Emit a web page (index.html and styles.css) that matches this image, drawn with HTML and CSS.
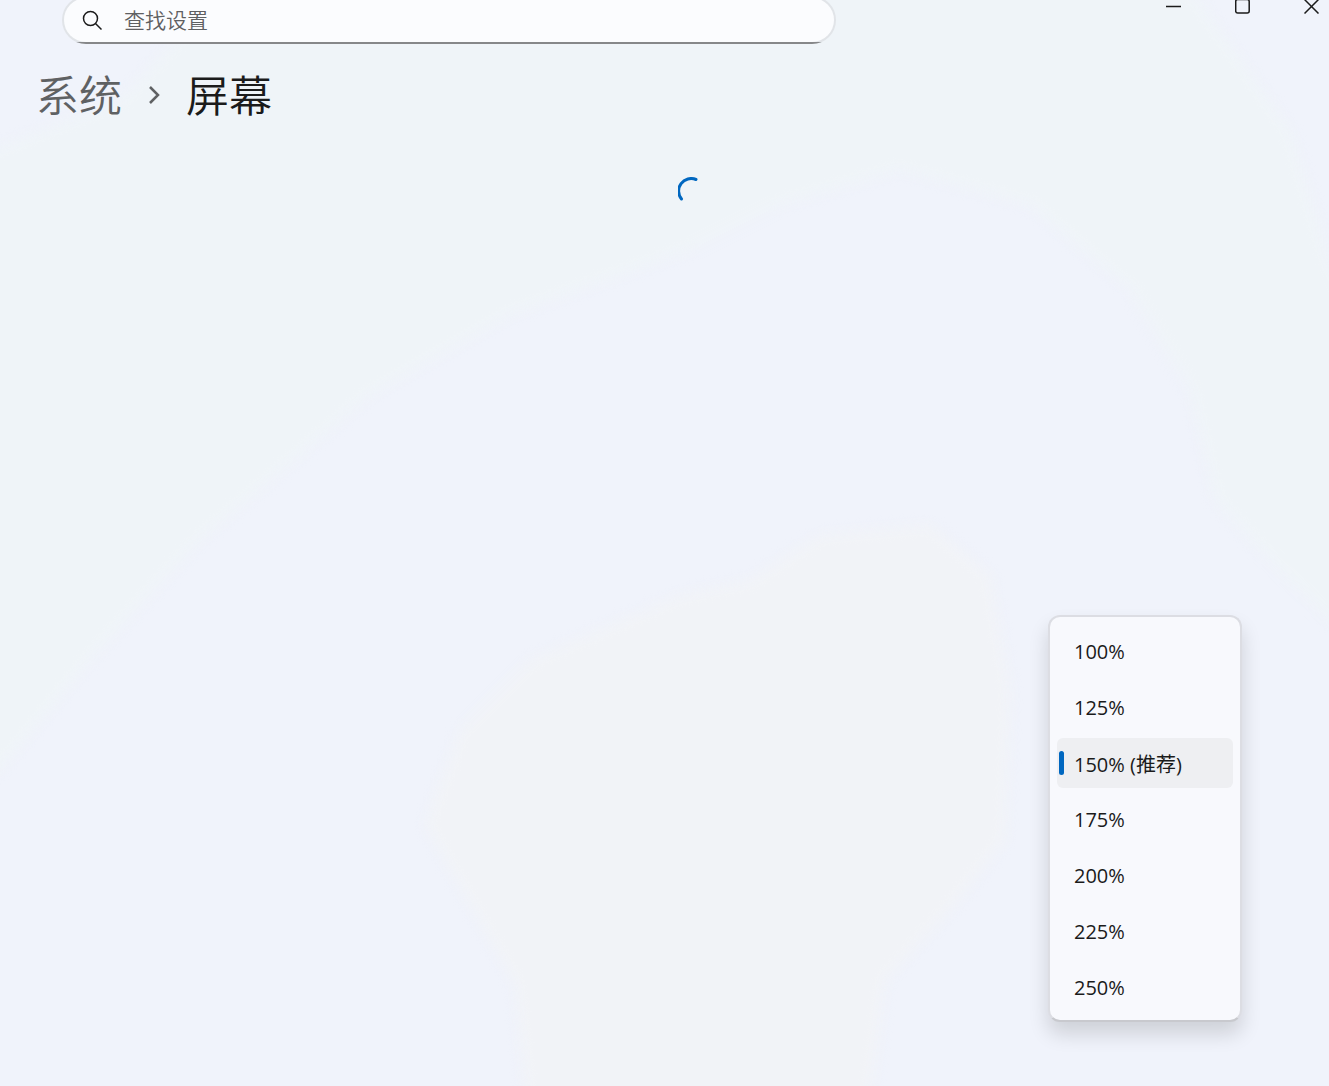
FILE: index.html
```html
<!DOCTYPE html>
<html lang="zh-CN">
<head>
  <meta charset="UTF-8">
  <meta name="viewport" content="width=device-width, initial-scale=1.0">
  <title>设置</title>
  <link rel="stylesheet" href="styles.css">
</head>
<body>

  <svg class="backdrop" viewBox="0 0 1329 1086" preserveAspectRatio="none" aria-hidden="true">
    <path class="tint-green" d="M250 -40H1170L1290 130L1329 260L1400 400V680L1329 620L1260 550L1215 500L1190 390L1130 290L1030 205L900 170L780 205L690 250L510 315L370 395L200 540L90 660L0 770L-60 800V170L120 100Z"/>
    <path class="tint-gray" d="M820 535L930 525L990 575L1010 690L1005 840L950 910L885 980L865 1140H530L515 985L425 825L460 730L530 660L680 595L750 580Z"/>
  </svg>

  <header class="titlebar">
    <div class="search">
      <svg class="search-icon" viewBox="0 0 20 20" stroke-width="1.5" aria-hidden="true">
        <circle cx="8.5" cy="8.5" r="7"/>
        <path d="M13.5 13.5l6 6"/>
      </svg>
      <input type="text" id="search" placeholder="查找设置" aria-label="查找设置">
    </div>
    <div class="window-buttons">
      <button type="button" aria-label="最小化">
        <svg viewBox="0 0 16 16" stroke-width="1.5"><path d="M0 8.5h15"/></svg>
      </button>
      <button type="button" aria-label="最大化">
        <svg viewBox="0 0 16 16" stroke-width="1.5"><rect x=".7" y="1.5" width="13.5" height="13.5" rx="2"/></svg>
      </button>
      <button type="button" aria-label="关闭">
        <svg viewBox="0 0 16 16" stroke-width="1.5"><path d="M.5 1.5l14 14M14.5 1.5l-14 14"/></svg>
      </button>
    </div>
  </header>

  <main>
    <nav class="breadcrumb">
      <a href="#">系统</a>
      <svg class="chevron" viewBox="0 0 12 22" stroke-width="2.5" aria-hidden="true"><path d="M2 5l8 8-8 8"/></svg>
      <h1>屏幕</h1>
    </nav>

    <div class="content">
      <svg class="spinner" viewBox="0 0 30 30" role="img" aria-label="正在加载">
        <path d="M18 2.5A12.5 12.5 0 0 0 3.500 22"/>
      </svg>
    </div>
  </main>

  <select class="scale-menu" size="7" aria-label="缩放">
    <option>100%</option>
    <option>125%</option>
    <option selected>150% (推荐)</option>
    <option>175%</option>
    <option>200%</option>
    <option>225%</option>
    <option>250%</option>
  </select>

</body>
</html>
```
FILE: styles.css
```css
* {
  margin: 0;
  padding: 0;
  box-sizing: border-box;
}

body {
  position: relative;
  min-height: 100vh;
  overflow: hidden;
  font-family: "Open Sans", "Noto Sans CJK SC", sans-serif;
  font-size: 20px;
  background: #f0f3fb;
  color: #1b1b1b;
}

svg {
  fill: none;
  stroke: currentColor;
  display: block;
}

/* Mica tint */
.backdrop {
  position: absolute;
  width: 100%;
  height: 100%;
  z-index: -1;
  stroke: none;
}

.backdrop path {
  filter: blur(6px);
}

.tint-green {
  fill: #eff4f8;
}

.tint-gray {
  fill: #f1f3f7;
}

.titlebar {
  display: flex;
  justify-content: space-between;
  align-items: flex-start;
  margin-top: -4px;
  padding-left: 62px;
}

.search {
  display: flex;
  align-items: center;
  flex: 0 1 774px;
  height: 48px;
  gap: 22px;
  padding: 0 20px 0 18px;
  /* fill, dark bottom line, light outline */
  background:
    linear-gradient(#fbfcfe, #fbfcfe) padding-box,
    linear-gradient(#868789, #868789) bottom / 100% 2px no-repeat border-box,
    linear-gradient(#e1e4e8, #e1e4e8) border-box;
  border: 2px solid transparent;
  border-radius: 24px;
}

.search-icon {
  flex: none;
  width: 20px;
  height: 20px;
}

.search input {
  flex: 1;
  min-width: 0;
  height: 42px;
  padding-bottom: 2px;
  border: none;
  outline: none;
  background: none;
  font-family: "Noto Sans CJK SC", sans-serif;
  font-size: 21px;
  font-weight: 350;
}

.search input::placeholder {
  color: #5f6062;
}

.window-buttons {
  display: flex;
  flex: none;
  margin-right: -17px;
}

.window-buttons button {
  width: 69px;
  height: 20px;
  border: none;
  background: none;
  color: #1b1b1b;
}

.window-buttons svg {
  width: 16px;
  height: 16px;
  margin: 0 auto;
}

.breadcrumb {
  display: flex;
  align-items: center;
  gap: 26px;
  padding: 19px 36px 0;
  font-family: "Noto Sans CJK SC", sans-serif;
  font-size: 43px;
  line-height: 60px;
}

.breadcrumb a {
  color: #5f6163;
  font-weight: 350;
  text-decoration: none;
}

.breadcrumb h1 {
  font-size: 43px;
  font-weight: 350;
}

.chevron {
  width: 12px;
  height: 22px;
  color: #5f6163;
}

.content {
  padding: 54px 0 0 56px;
}

.spinner {
  width: 30px;
  height: 30px;
  margin: 0 auto;
  color: #0067c0;
  stroke-width: 3;
  stroke-linecap: round;
}

/* Open list of scale values */
.scale-menu {
  position: absolute;
  right: 87px;
  bottom: 64px;
  width: 194px;
  height: 407px;
  padding: 9px 7px;
  overflow: hidden;
  font-family: "Open Sans", "Noto Sans CJK SC", sans-serif;
  font-size: 20px;
  color: #1b1b1b;
  background: #f8f9fd;
  border: 2px solid #dcdde3;
  border-bottom-color: #c8c9ce;
  border-radius: 12px;
  outline: none;
  box-shadow: 0 12px 20px rgba(0, 0, 0, 0.14);
}

.scale-menu option {
  display: flex;
  align-items: center;
  height: 50px;
  margin-bottom: 6px;
  padding: 0 17px;
  border-radius: 6px;
  position: relative;
}

.scale-menu option:checked {
  color: #1b1b1b;
  background: linear-gradient(#eeeff2, #eeeff2);
}

.scale-menu option:checked::before {
  content: "";
  position: absolute;
  left: 2px;
  top: 13px;
  width: 5px;
  height: 24px;
  border-radius: 3px;
  background: #0067c0;
}
```
